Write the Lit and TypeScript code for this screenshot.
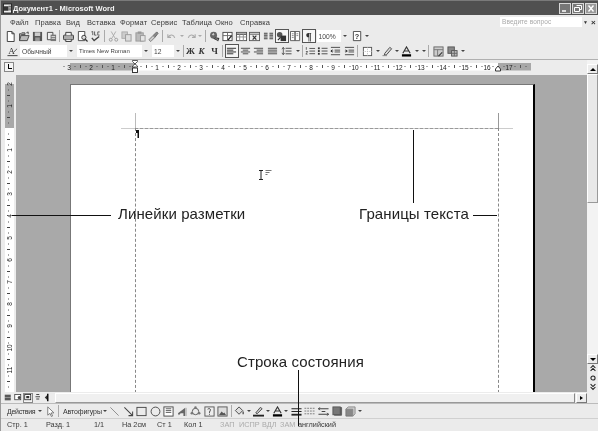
import { LitElement, html, css, svg } from "lit";
import { customElement } from "lit/decorators.js";

const I: Record<string, any> = {
  new: svg`<path d="M2.5 .5h5l2.500 2.500v8.500h-7.500z" fill="#fff" stroke="#333"/><path d="M7.500 .5v2.500h2.500" fill="none" stroke="#333"/>`,
  open: svg`<path d="M.5 10.500v-7.500h1.500l1-1h3.500v2h-4l-2 6.500h8.500l2-5.500h-8.500" fill="#bbb" stroke="#444"/><path d="M8 2l2-1v2.500" fill="none" stroke="#444"/>`,
  save: svg`<rect x="1" y="1" width="10" height="10" fill="#555"/><rect x="3" y="1.500" width="6" height="4" fill="#ccc"/><rect x="3.500" y="7" width="5" height="4" fill="#999"/>`,
  perm: svg`<path d="M1.500 1.500h6v8h-6z" fill="#eee" stroke="#444"/><rect x="5" y="4" width="6" height="7" fill="#777"/><path d="M6 6h4M6 8h4" stroke="#ddd"/>`,
  print: svg`<rect x=".5" y="4.500" width="11" height="5" rx="1" fill="#aaa" stroke="#333"/><path d="M3 4.500v-3h6v3M3 9.500v2h6v-2" fill="#eee" stroke="#333"/>`,
  preview: svg`<path d="M1.500 .5h7v10h-7z" fill="#fff" stroke="#444"/><circle cx="7.500" cy="7" r="2.300" fill="#ddd" stroke="#333"/><path d="M9 9l2.500 2.500" stroke="#333" stroke-width="1.300"/>`,
  spell: svg`<path d="M1.500 1l1.500-.5v4M5 .5v4h2M10.500 1h-2v3.500h2" fill="none" stroke="#555"/><path d="M2 7.500l2.500 3 5.500-4.500" fill="none" stroke="#444" stroke-width="1.500"/>`,
  cut: svg`<path d="M3.500 .5l4 7M8.500 .5l-4 7" stroke="#aaa"/><circle cx="3" cy="9.500" r="1.600" fill="none" stroke="#999"/><circle cx="9" cy="9.500" r="1.600" fill="none" stroke="#999"/>`,
  copy: svg`<rect x="1" y="1" width="6" height="7" fill="#ccc" stroke="#aaa"/><rect x="5" y="4" width="6" height="7" fill="#ddd" stroke="#999"/>`,
  paste: svg`<rect x="1" y="2" width="8" height="9" fill="#bbb" stroke="#999"/><rect x="3" y=".5" width="4" height="2.500" fill="#999"/><rect x="6" y="5" width="5" height="6" fill="#e5e5e5" stroke="#999"/>`,
  painter: svg`<path d="M1 9.500l4.500-4.500 2 2-4.500 4.500z" fill="#ccc" stroke="#777"/><path d="M5.500 5l4-4 1.500 1.500-3.500 4.500" fill="#888" stroke="#666"/>`,
  undo: svg`<path d="M2 3.500v3.500h3.500M2.500 6.500c2-3 6-3 7 1" fill="none" stroke="#aaa" stroke-width="1.200"/>`,
  redo: svg`<path d="M10 3.500v3.500h-3.500M9.500 6.500c-2-3-6-3-7 1" fill="none" stroke="#aaa" stroke-width="1.200"/>`,
  link: svg`<circle cx="5" cy="4.500" r="3.800" fill="#666"/><path d="M3 4l2-2 1 2-1.500 1z" fill="#ccc"/><path d="M5 8l5 2.500M7 7.500l3.500.5-1 3" stroke="#333" stroke-width="1.200" fill="none"/>`,
  tblp: svg`<rect x="1" y="1.500" width="10" height="9" fill="#fff" stroke="#444"/><path d="M1 5h10M6 1.500v9" stroke="#666"/><path d="M6.500 10l4-5" stroke="#222" stroke-width="1.500"/>`,
  tbl2: svg`<rect x=".5" y="1.500" width="11" height="9" fill="#fff" stroke="#555"/><path d="M.5 3.500h11" stroke="#555" stroke-width="1.500"/><path d="M.5 6.500h11M4 3.500v7M8 3.500v7" stroke="#888"/>`,
  xl: svg`<rect x=".5" y="1.500" width="11" height="9" fill="#eee" stroke="#555"/><path d="M.5 3.500h11" stroke="#555"/><path d="M4 5l4 4.500M8 5l-4 4.500" stroke="#333" stroke-width="1.300"/>`,
  cols: svg`<path d="M1 2.500h4M7 2.500h4M1 4.500h4M7 4.500h4M1 6.500h4M7 6.500h4M1 8.500h4M7 8.500h4" stroke="#444" stroke-width="1.200"/>`,
  draw: svg`<circle cx="4" cy="4" r="3" fill="#555"/><rect x="5" y="5" width="6" height="6" fill="#333"/><path d="M2 10l3-3" stroke="#222" stroke-width="1.300"/>`,
  map: svg`<path d="M.5 .5h5v10h-5zM5.500 .5h5v10h-5z" fill="#fff" stroke="#555"/><path d="M2 3h2M2 5h2M2 7h2M7 3h2M7 5h2" stroke="#888"/>`,
  help: svg`<path d="M1.500 .5h8v10h-8z" fill="#fff" stroke="#444"/><text x="5.500" y="8.500" font-size="8" font-family="Liberation Sans" font-weight="700" text-anchor="middle" fill="#333">?</text>`,
  style: svg`<text x="5" y="8.500" font-size="10" font-family="Liberation Serif" text-anchor="middle" fill="#333">A</text><path d="M.5 10.500h11" stroke="#333"/><path d="M7 7l4-4" stroke="#555"/>`,
  left: svg`<path d="M1 2.500h10M1 4.500h7M1 6.500h10M1 8.500h7" stroke="#222"/>`,
  center: svg`<path d="M1 2.500h10M3 4.500h6M1 6.500h10M3 8.500h6" stroke="#444"/>`,
  right: svg`<path d="M1 2.500h10M4 4.500h7M1 6.500h10M4 8.500h7" stroke="#444"/>`,
  just: svg`<path d="M1 2.500h10M1 4.500h10M1 6.500h10M1 8.500h10" stroke="#444"/>`,
  spacing: svg`<path d="M5 2.500h6.500M5 5.500h6.500M5 8.500h6.500" stroke="#444"/><path d="M2.500 1.500v8M1 3.500l1.500-2 1.500 2M1 7.500l1.500 2 1.500-2" fill="none" stroke="#555"/>`,
  nums: svg`<path d="M5 2.500h6.500M5 5.500h6.500M5 8.500h6.500" stroke="#444"/><path d="M1.500 1v3M1 6h2l-2 3h2" fill="none" stroke="#333" stroke-width=".8"/>`,
  bul: svg`<path d="M5 2.500h6.500M5 5.500h6.500M5 8.500h6.500" stroke="#444"/><rect x="1" y="1.500" width="2" height="2" fill="#333"/><rect x="1" y="4.500" width="2" height="2" fill="#333"/><rect x="1" y="7.500" width="2" height="2" fill="#333"/>`,
  out: svg`<path d="M1 1.500h10M5 4.500h6M5 6.500h6M1 9.500h10" stroke="#444"/><path d="M1 5.500h2.500M2.500 4l-1.500 1.500 1.500 1.500" fill="none" stroke="#222"/>`,
  ind: svg`<path d="M1 1.500h10M5 4.500h6M5 6.500h6M1 9.500h10" stroke="#444"/><path d="M1 5.500h2.500M2 4l1.500 1.500-1.500 1.500" fill="none" stroke="#222"/>`,
  border: svg`<rect x="1.500" y="1.500" width="9" height="9" fill="#fff" stroke="#555"/><path d="M1.500 6h9M6 1.500v9" stroke="#bbb" stroke-dasharray="1 1"/>`,
  hl: svg`<path d="M3 8l5.500-6.500 2 1.500-5.500 6.500-2.500.5z" fill="#ddd" stroke="#444"/><path d="M.5 10.500h5" stroke="#888"/>`,
  color: svg`<path d="M2 8l4-7 4 7M3.500 5.500h5" fill="none" stroke="#333" stroke-width="1.200"/><rect x="1" y="9" width="10" height="2.500" fill="#000"/>`,
  forms: svg`<rect x="1" y="1" width="10" height="10" fill="#ccc" stroke="#666"/><path d="M1 4h10M5 4v7" stroke="#777"/><path d="M6 11l4-4" stroke="#333" stroke-width="1.200"/>`,
  tbls: svg`<rect x="1" y="1" width="7" height="7" fill="#888" stroke="#555"/><rect x="5" y="5" width="6" height="6" fill="#bbb" stroke="#555"/><path d="M5 8h6M8 5v6" stroke="#666"/>`,
  ptr: svg`<path d="M3 1v9l2.500-2 1.500 3.500 1.300-.6-1.500-3.400h3z" fill="#fff" stroke="#777"/>`,
  line: svg`<path d="M1.500 1.500l9 9" stroke="#888"/>`,
  arrow: svg`<path d="M1.500 1.500l9 9M10.500 6v4.500h-4.500" stroke="#444" fill="none" stroke-width="1.100"/>`,
  rect: svg`<rect x="1" y="1.500" width="10" height="9" fill="none" stroke="#444"/>`,
  oval: svg`<circle cx="6" cy="6" r="4.800" fill="none" stroke="#444"/>`,
  tbox: svg`<rect x="1" y="1" width="10" height="10" fill="#fff" stroke="#444"/><path d="M3 3h6M3 5h6M3 7h6" stroke="#555"/>`,
  wa: svg`<path d="M1 8l8-6v9h-2v-3h-3l-2 2z" fill="#666"/><path d="M10 2v9" stroke="#aaa"/>`,
  diag: svg`<circle cx="6" cy="6" r="3.500" fill="none" stroke="#555"/><circle cx="6" cy="1.800" r="1.400" fill="#777"/><circle cx="2" cy="8" r="1.400" fill="#777"/><circle cx="10" cy="8" r="1.400" fill="#777"/>`,
  clip: svg`<rect x="1" y="1" width="10" height="10" fill="#eee" stroke="#555"/><path d="M4 3.500c2-1.500 4 0 2.500 2-.6.800-.5 1.500-.5 2M6 8.500v1" fill="none" stroke="#333"/>`,
  pic: svg`<rect x="1" y="1" width="10" height="10" fill="#ddd" stroke="#555"/><path d="M2 10l3-4 2 2 1-1 2 3z" fill="#555"/>`,
  fill: svg`<path d="M1.500 5l4-4 4 4-4 4z" fill="#ddd" stroke="#444"/><path d="M10 6v3" stroke="#555" stroke-width="1.500"/>`,
  lc: svg`<path d="M3 7.500l5-6 2 1.500-5.500 5.500z" fill="#ccc" stroke="#444"/><rect x="0" y="9.500" width="12" height="2" fill="#222"/>`,
  lstyle: svg`<path d="M.5 3h11M.5 6h11" stroke="#222" stroke-width="1.300"/><path d="M.5 9.500h11" stroke="#222" stroke-width="2"/>`,
  dash: svg`<path d="M.5 2.500h11M.5 5.500h11M.5 8.500h11" stroke="#777" stroke-dasharray="2 1"/>`,
  arrs: svg`<path d="M.5 3h11M.5 9h11M2 1.500l-1.500 1.500 1.500 1.500M10 7.500l1.500 1.500-1.500 1.500M4 6h4" fill="none" stroke="#333"/>`,
  shadow: svg`<rect x="2" y="1" width="9" height="9.500" rx="1" fill="#666"/><rect x="1" y="1" width="8" height="8.500" fill="#777" stroke="#555"/>`,
  d3: svg`<path d="M1 3.500h7.500v7.500h-7.500z" fill="#888" stroke="#777"/><path d="M1 3.500l2.500-2.500h7.500v7.500l-2.500 2.500v-7.500z" fill="#ccc" stroke="#888"/>`,
  vn: svg`<path d="M1 3h8M1 5h8M1 7h8M1 9h8" stroke="#111" stroke-width="1.200"/>`,
  vw: svg`<rect x="1" y="2" width="8" height="7" fill="#fff" stroke="#333"/><circle cx="7" cy="6" r="2" fill="#444"/>`,
  vp: svg`<rect x="1" y="2" width="8" height="7" fill="#fff" stroke="#111"/><rect x="3" y="4" width="4" height="3" fill="#333"/>`,
  vo: svg`<path d="M3 2h4M2 5h6M3 8h4" stroke="#333" stroke-width="1.200"/>`,
  vr: svg`<path d="M5 1v10" stroke="#111" stroke-width="2"/><path d="M1 6l3-3v6z" fill="#333"/>`,
  prev: svg`<path d="M2 5l3-3 3 3M2 8.500l3-3 3 3" fill="none" stroke="#222" stroke-width="1.300"/>`,
  sel: svg`<circle cx="5" cy="5" r="2.600" fill="none" stroke="#222" stroke-width="1.300"/>`,
  next: svg`<path d="M2 1.500l3 3 3-3M2 5l3 3 3-3" fill="none" stroke="#222" stroke-width="1.300"/>`,
};

@customElement("app-root")
export class AppRoot extends LitElement {
  static styles = css`
    :host { display: block; width: 598px; height: 431px; overflow: hidden; position: relative; background: #ebebeb;
      font-family: "Liberation Sans", Arial, sans-serif; color: #3a3a3a; font-size: 7.500px; }
    * { box-sizing: border-box; }
    .shell { display: flex; flex-direction: column; height: 431px; filter: blur(.3px) grayscale(1); border-left: 1px solid #999; }
    .title { height: 15px; flex: none; background: #505050; border-top: 1px solid #7a7a7a; display: flex; align-items: center; padding: 0 1px 0 2px; color: #f4f4f4; font-weight: 700; font-size: 7.500px; }
    .appicon { width: 9px; height: 11px; margin-right: 1px; flex: none; }
    .ttext { flex: 1; }
    .wbtn { width: 12px; height: 11px; margin-left: 1px; border: 1px solid #d8d8d8; background: #777; display: flex; flex: none; }
    .wbtn.x { background: #999; }
    .wbtn svg { width: 10px; height: 9px; }
    .menu { height: 14px; flex: none; display: flex; align-items: center; padding-left: 9px; font-size: 7.500px; letter-spacing: .1px; }
    .menu span.m { width: var(--w); flex: none; white-space: nowrap; }
    .ask { margin-left: auto; width: 82px; height: 10px; background: #fff; color: #aaa; padding: 1px 0 0 2px; font-size: 6.500px; line-height: 8px; flex: none; }
    .askdd { width: 7px; text-align: center; flex: none; color: #333; font-size: 5px; }
    .askx { width: 9px; flex: none; font-weight: 700; color: #333; font-size: 8px; text-align: center; }
    .tb { flex: none; display: flex; align-items: center; padding-left: 3px; height: 14px; }
    .tb.fmt { height: 16px; }
    .it { flex: none; height: 14px; display: flex; align-items: center; justify-content: center; }
    .it svg { width: 11px; height: 11px; }
    .it.press { background: #f6f6f6; outline: 1px solid #555; outline-offset: -1px; }
    .sep { flex: none; width: 1px; height: 12px; background: #aaa; margin: 0 2px 0 1px; }
    .dd { flex: none; width: 7px; display: flex; justify-content: center; }
    .dd i { display: block; border: 2px solid transparent; border-top: 2.500px solid #444; border-bottom: 0; }
    .dd.off i { border-top-color: #aaa; }
    .combo { flex: none; height: 12px; background: #fff; display: flex; align-items: center; padding-left: 2px; margin-right: 2px; white-space: nowrap; color: #444; font-size: 6.700px; }
    .combo.serif { font-size: 6px; }
    .combo.last { margin-right: 0; }
    .combo span { flex: 1; }
    .combo .dd { flex: none; width: 8px; background: #ececec; height: 12px; align-items: center; }
    .gl { font-family: "Liberation Serif", serif; font-weight: 700; font-size: 9px; color: #333; }
    .gl.i { font-style: italic; }
    .gl.pil { font-size: 11px; }
    .main { flex: 1; min-height: 0; display: grid; grid-template-columns: 15px 571px 11px; grid-template-rows: 15px 1fr; background: #ececec; border-top: 1px solid #b0b0b0; }
    .corner { padding: 2px 0 0 3px; }
    .corner b { display: block; width: 10px; height: 10px; border: 1px solid #888; background: #f4f4f4; position: relative; }
    .corner b::after { content: ""; position: absolute; left: 3px; top: 1px; width: 3px; height: 4px; border-left: 1.200px solid #000; border-bottom: 1.200px solid #000; }
    .hr svg, .vr svg { display: block; }
    .vsb { grid-row: 1 / 3; grid-column: 3; display: flex; flex-direction: column; padding-top: 4px; background: #f3f3f3; overflow: hidden; }
    .sbb { height: 10px; flex: none; background: #ececec; border: 1px solid; border-color: #fff #777 #777 #fff; display: flex; align-items: center; justify-content: center; }
    .up { border: 3px solid transparent; border-bottom: 3px solid #000; border-top: 0; }
    .down { border: 3px solid transparent; border-top: 3px solid #000; border-bottom: 0; }
    .thumb { height: 129px; flex: none; background: #e8e8e8; border: 1px solid; border-color: #fff #999 #999 #fff; }
    .track { height: 151px; flex: none; }
    .browse { display: flex; flex-direction: column; align-items: center; gap: 1.500px; padding-top: 0; background: #ececec; flex: 1; }
    .browse svg { width: 8px; height: 8px; display: block; }
    .doc { background: #a9a9a9; padding: 9px 0 0 54px; overflow: hidden; }
    .page { width: 465px; height: 320px; background: #fff; border-top: 1px solid #777; border-left: 1px solid #777; border-right: 2px solid #000; position: relative; }
    .h { position: absolute; height: 0; }
    .v { position: absolute; width: 0; }
    .hsb { height: 11px; flex: none; display: flex; align-items: center; padding-left: 2px; background: #ececec; }
    .vbtn { width: 10px; height: 10px; flex: none; display: flex; align-items: center; justify-content: center; }
    .vbtn svg { width: 9px; height: 9px; }
    .vbtn.on { outline: 1px solid #888; outline-offset: -1px; background: #f5f5f5; }
    .hthumb { width: 520px; height: 10px; background: #f0f0f0; border: 1px solid; border-color: #fff #888 #999 #fff; flex: none; margin-left: 2px; }
    .hbtn { width: 11px; height: 10px; margin-left: 1px; }
    .right { border: 2.500px solid transparent; border-left: 3px solid #000; border-right: 0; }
    .draw { height: 15px; border-top: 1px solid #bbb; }
    .txt { flex: none; white-space: nowrap; color: #333; font-size: 7px; letter-spacing: -.1px; }
    .txt.act { width: 32px; padding-left: 3px; letter-spacing: -.3px; }
    .txt.auto { width: 40px; padding-left: 2px; }
    .status { height: 13px; flex: none; display: flex; align-items: center; border-top: 1px solid #d0d0d0; padding: 0 0 1px 6px; font-size: 7.300px; white-space: nowrap; background: #ebebeb; }
    .status span { flex: none; width: var(--w); }
    .status .dim { color: #aaa; }
    .ann { position: absolute; font-size: 15px; color: #222; white-space: nowrap; line-height: 18px; letter-spacing: .1px; }
    .ln { position: absolute; background: #111; }
  `;

  ic(n: string, w = 13.5, press = false) {
    return html`<span class="it ${press ? "press" : ""}" style="width:${w}px"><svg viewBox="0 0 12 12">${I[n]}</svg></span>`;
  }
  gl(t: string, cls = "", w = 13.5, press = false) {
    return html`<span class="it gl ${cls} ${press ? "press" : ""}" style="width:${w}px">${t}</span>`;
  }
  dd(off = false) { return html`<span class="dd ${off ? "off" : ""}"><i></i></span>`; }
  sep() { return html`<span class="sep"></span>`; }

  hruler() {
    const o = 135 - 16, parts: any[] = [];
    for (let n = -13; n <= 71; n++) {
      const x = o + n * 5.5;
      if (n === 0 || n === 66) continue;
      if (n % 4 === 0) parts.push(svg`<text x="${x}" y="9.500" font-size="6.500" text-anchor="middle" font-family="Liberation Sans" fill="#222">${Math.abs(n / 4)}</text>`);
      else if (n % 2 === 0) parts.push(svg`<rect x="${x}" y="5" width="1" height="3" fill="#555"/>`);
      else parts.push(svg`<rect x="${x}" y="6" width="1" height="1" fill="#555"/>`);
    }
    return svg`<svg width="571" height="15">
      <rect x="${70 - 16}" y="3" width="65" height="7.500" fill="#a8a8a8"/>
      <rect x="${135 - 16}" y="3" width="363" height="7.500" fill="#fff"/>
      <rect x="${498 - 16}" y="3" width="33" height="7.500" fill="#a8a8a8"/>
      ${parts}
      <path d="M${o - 2.500} .5h5v1l-2.500 2.500-2.500-2.500z" fill="#fff" stroke="#333" stroke-width=".8"/>
      <path d="M${o - 2.500} 7v-1l2.500-2 2.500 2v1z" fill="#fff" stroke="#333" stroke-width=".8"/>
      <rect x="${o - 2.500}" y="8" width="5" height="4.500" fill="#fff" stroke="#222" stroke-width=".9"/>
      <path d="M${498 - 18.500} 11h5v-2l-2.500-3-2.500 3z" fill="#fff" stroke="#222" stroke-width=".9"/>
    </svg>`;
  }
  vruler() {
    const o = 128 - 75, parts: any[] = [];
    for (let n = -8; n <= 47; n++) {
      const y = o + n * 5.5;
      if (n === 0) continue;
      if (n % 4 === 0) parts.push(svg`<text x="0" y="0" transform="translate(10.500 ${y}) rotate(-90)" font-size="6.500" text-anchor="middle" font-family="Liberation Sans" fill="#222">${Math.abs(n / 4)}</text>`);
      else if (n % 2 === 0) parts.push(svg`<rect x="6" y="${y}" width="3" height="1" fill="#444"/>`);
      else parts.push(svg`<rect x="7" y="${y}" width="1" height="1" fill="#555"/>`);
    }
    return svg`<svg width="15" height="317">
      <rect x="4" y="9" width="9" height="${o - 9}" fill="#a8a8a8"/>
      <rect x="4" y="${o}" width="9" height="270" fill="#fff"/>
      ${parts}
    </svg>`;
  }

  render() {
    const menu: [string, number][] = [["Файл",25],["Правка",31],["Вид",21],["Вставка",33],["Формат",31],["Сервис",31],["Таблица",33],["Окно",25],["Справка",30]];
    const px = 71, py = 85;
    const stat: [string, number, boolean?][] = [["Стр. 1",39],["Разд. 1",48],["1/1",28],["На 2см",35],["Ст 1",27],["Кол 1",36],["ЗАП",19,true],["ИСПР",23,true],["ВДЛ",18,true],["ЗАМ",18,true],["английский",50]];
    return html`
      <div class="shell">
        <div class="title">
          <svg class="appicon" viewBox="0 0 10 11"><rect x=".5" y=".5" width="9" height="10" fill="#eee" stroke="#222"/><rect x="1" y="3" width="5" height="5" fill="#333"/><path d="M6 3h3M6 5h3M6 7h3" stroke="#333"/></svg>
          <span class="ttext">Документ1 - Microsoft Word</span>
          <span class="wbtn"><svg viewBox="0 0 10 9"><path d="M2 7h4" stroke="#fff" stroke-width="1.500"/></svg></span>
          <span class="wbtn"><svg viewBox="0 0 10 9"><path d="M3.500 1.500h5v4h-2M1.500 3.500h5v4h-5z" fill="none" stroke="#fff"/></svg></span>
          <span class="wbtn x"><svg viewBox="0 0 10 9"><path d="M2.500 1.500l5 6M7.500 1.500l-5 6" stroke="#fff" stroke-width="1.400"/></svg></span>
        </div>
        <div class="menu">
          ${menu.map(([t, w]) => html`<span class="m" style="--w:${w}px">${t}</span>`)}
          <span class="ask">Введите вопрос</span><span class="askdd">▼</span><span class="askx">×</span>
        </div>
        <div class="tb">
          ${this.ic("new")}${this.ic("open")}${this.ic("save")}${this.ic("perm")}${this.sep()}
          ${this.ic("print")}${this.ic("preview")}${this.ic("spell")}${this.sep()}
          ${this.ic("cut")}${this.ic("copy")}${this.ic("paste")}${this.ic("painter")}${this.sep()}
          ${this.ic("undo", 14)}${this.dd(true)}${this.ic("redo", 11)}${this.dd(true)}${this.sep()}
          ${this.ic("link")}${this.ic("tblp")}${this.ic("tbl2")}${this.ic("xl")}${this.ic("cols")}${this.ic("draw", 13.5, true)}${this.ic("map")}
          ${this.gl("¶", "pil", 13.5, true)}
          <span class="combo" style="width:32px;margin-left:1px"><span>100%</span><span class="dd"><i></i></span></span>
          ${this.ic("help", 13)}${this.dd()}
        </div>
        <div class="tb fmt">
          ${this.ic("style", 16)}
          <span class="combo" style="width:55px"><span>Обычный</span><span class="dd"><i></i></span></span>
          <span class="combo serif" style="width:73px"><span>Times New Roman</span><span class="dd"><i></i></span></span>
          <span class="combo last" style="width:30px"><span>12</span><span class="dd"><i></i></span></span>
          ${this.sep()}
          ${this.gl("Ж", "", 9)}${this.gl("К", "i", 13)}${this.gl("Ч", "", 13)}${this.sep()}
          ${this.ic("left", 13.5, true)}${this.ic("center")}${this.ic("right")}${this.ic("just")}
          ${this.ic("spacing", 15)}${this.dd()}${this.sep()}
          ${this.ic("nums", 10.5)}${this.ic("bul")}${this.ic("out")}${this.ic("ind")}${this.sep()}
          ${this.ic("border", 14)}${this.dd()}${this.ic("hl", 12)}${this.dd()}${this.ic("color", 13)}${this.dd()}${this.dd()}${this.sep()}
          ${this.ic("forms", 14)}${this.ic("tbls", 14)}${this.dd()}
        </div>
        <div class="main">
          <div class="corner"><b></b></div>
          <div class="hr">${this.hruler()}</div>
          <div class="vsb">
            <div class="sbb"><i class="up"></i></div>
            <div class="thumb"></div>
            <div class="track"></div>
            <div class="sbb"><i class="down"></i></div>
            <div class="browse">
              <svg viewBox="0 0 10 10">${I.prev}</svg>
              <svg viewBox="0 0 10 10">${I.sel}</svg>
              <svg viewBox="0 0 10 10">${I.next}</svg>
            </div>
          </div>
          <div class="vr">${this.vruler()}</div>
          <div class="doc">
            <div class="page">
              <div class="h" style="left:${121 - px}px;width:392px;top:${128 - py}px;border-top:1px solid #ccc"></div>
              <div class="h" style="left:${135 - px}px;width:363px;top:${128 - py}px;border-top:1px dashed #999"></div>
              <div class="v" style="left:${135 - px}px;top:${113 - py}px;height:15px;border-left:1px solid #bbb"></div>
              <div class="v" style="left:${498 - px}px;top:${113 - py}px;height:15px;border-left:1px solid #999"></div>
              <div class="v" style="left:${135 - px}px;top:${128 - py}px;height:270px;border-left:1px dashed #888"></div>
              <div class="v" style="left:${498 - px}px;top:${128 - py}px;height:270px;border-left:1px dashed #888"></div>
              <svg style="position:absolute;left:${136 - px}px;top:${129 - py}px" width="4" height="10"><path d="M0 1h3v8h-1.500v-5h-1.500z" fill="#111"/></svg>
              <svg style="position:absolute;left:${258 - px}px;top:${169 - py}px" width="15" height="12"><path d="M1 1.500h4M3 1.500v9M1 10.500h4" stroke="#222" fill="none"/><path d="M7.500 1.500h6M7.500 3.500h4M7.500 5.500h2" stroke="#777"/></svg>
            </div>
          </div>
        </div>
        <div class="hsb">
          ${["vn","vw","vp","vo","vr"].map((n, i) => html`<span class="vbtn ${i === 2 ? "on" : ""}"><svg viewBox="0 0 12 12">${I[n]}</svg></span>`)}
          <span class="hthumb"></span>
          <span class="sbb hbtn"><i class="right"></i></span>
        </div>
        <div class="tb draw">
          <span class="txt act">Действия</span>${this.dd()}
          ${this.ic("ptr", 14)}${this.sep()}
          <span class="txt auto">Автофигуры</span>${this.dd()}
          ${this.ic("line")}${this.ic("arrow")}${this.ic("rect")}${this.ic("oval")}${this.ic("tbox")}${this.ic("wa")}${this.ic("diag")}${this.ic("clip")}${this.ic("pic")}${this.sep()}
          ${this.ic("fill", 12)}${this.dd()}${this.ic("lc", 12)}${this.dd()}
          ${this.ic("color", 11)}${this.dd()}
          ${this.ic("lstyle", 13)}${this.ic("dash", 14)}${this.ic("arrs", 14)}${this.ic("shadow", 13)}${this.ic("d3", 13)}${this.dd()}
        </div>
        <div class="status">
          ${stat.map(([t, w, d]) => html`<span class="${d ? "dim" : ""}" style="--w:${w}px">${t}</span>`)}
        </div>
      </div>
      <span class="ln" style="left:12px;top:215px;width:99px;height:1px"></span>
      <span class="ann" style="left:118px;top:205px">Линейки разметки</span>
      <span class="ln" style="left:413px;top:130px;width:1px;height:73px"></span>
      <span class="ann" style="left:359px;top:205px">Границы текста</span>
      <span class="ln" style="left:473px;top:215px;width:24px;height:1px"></span>
      <span class="ann" style="left:237px;top:353px">Строка состояния</span>
      <span class="ln" style="left:298px;top:370px;width:1px;height:56px"></span>
    `;
  }
}
